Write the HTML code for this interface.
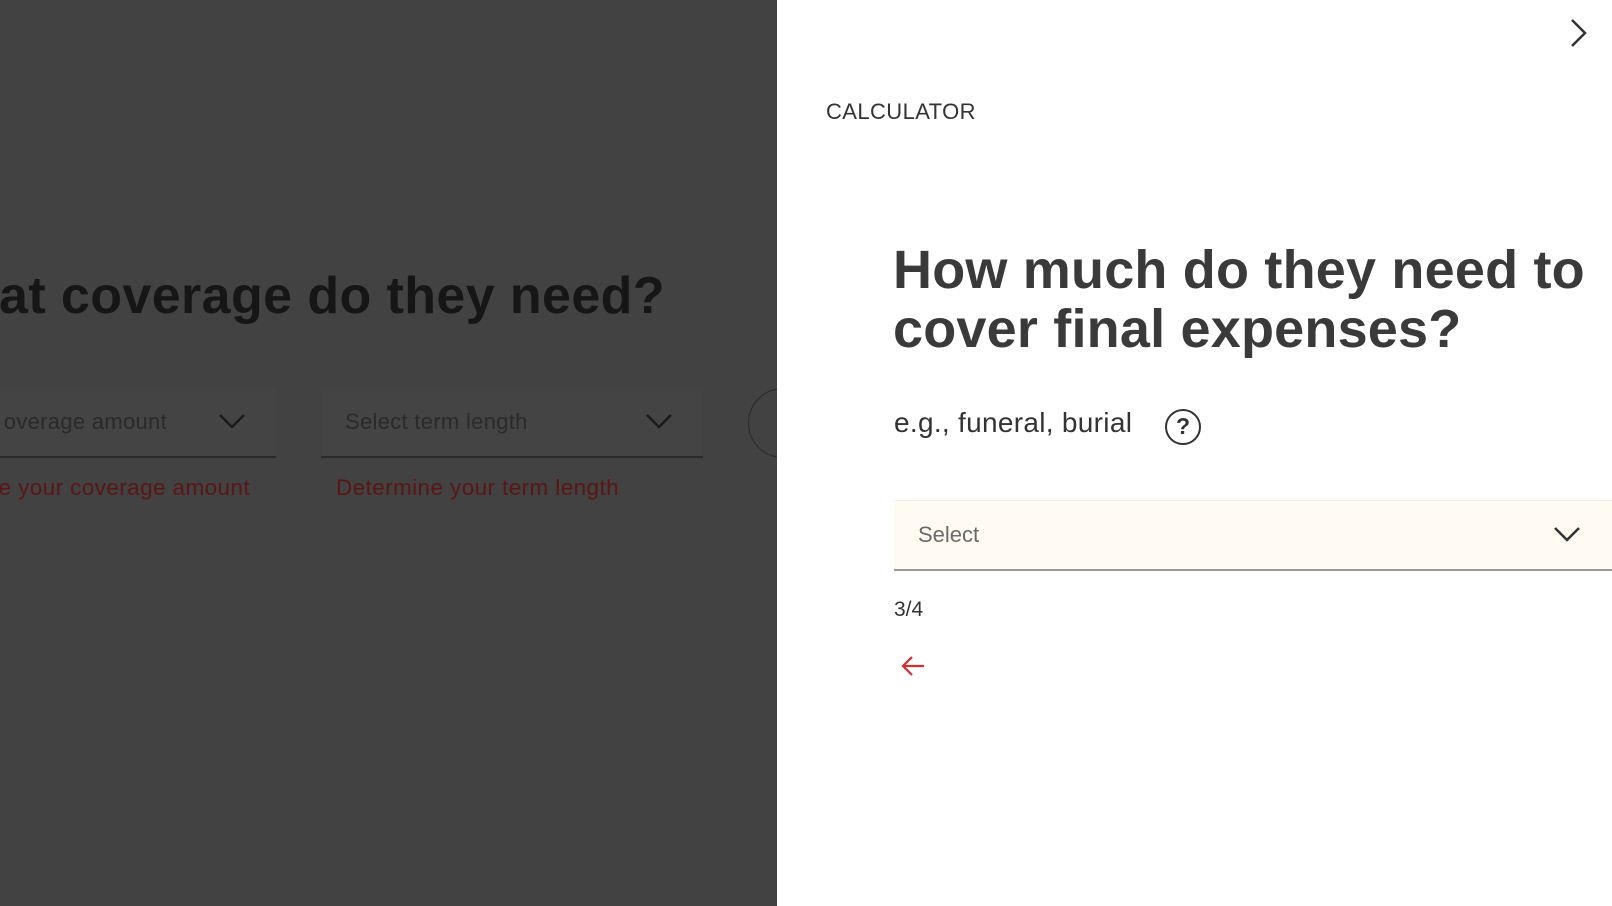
<!DOCTYPE html>
<html><head><meta charset="utf-8"><style>
*{margin:0;padding:0;box-sizing:border-box}
body{width:1612px;height:906px;overflow:hidden;position:relative;font-family:"Liberation Sans",sans-serif;background:#fff}
.left{position:absolute;left:0;top:0;width:777px;height:906px;background:#424242;overflow:hidden}
.abs{position:absolute;white-space:nowrap}
</style></head><body>
<div class="left">
  <div class="abs" style="right:112px;top:266px;font-size:52px;font-weight:bold;color:#161616;letter-spacing:0.4px">at coverage do they need?</div>
  <div class="abs" style="left:0;top:388px;width:276px;height:70px;border-bottom:2px solid #2a2a2a;background:#444"></div>
  <div class="abs" style="right:610px;top:409px;font-size:22px;color:#2a2a2a;letter-spacing:0.3px">overage amount</div>
  <svg class="abs" style="left:218px;top:412px" width="28" height="18" viewBox="0 0 28 18"><path d="M2 3 L14 15 L26 3" fill="none" stroke="#1a1a1a" stroke-width="2.5"/></svg>
  <div class="abs" style="left:321px;top:388px;width:382px;height:70px;border-bottom:2px solid #2a2a2a;background:#444"></div>
  <div class="abs" style="left:345px;top:409px;font-size:22px;color:#2a2a2a;letter-spacing:0.3px">Select term length</div>
  <svg class="abs" style="left:645px;top:412px" width="28" height="18" viewBox="0 0 28 18"><path d="M2 3 L14 15 L26 3" fill="none" stroke="#1a1a1a" stroke-width="2.5"/></svg>
  <div class="abs" style="left:748px;top:388px;width:70px;height:70px;border:1.5px solid #2a2a2a;border-radius:50%"></div>
  <div class="abs" style="right:527px;top:475px;font-size:22.5px;color:#5a1616;letter-spacing:0.4px">e your coverage amount</div>
  <div class="abs" style="left:336px;top:475px;font-size:22.5px;color:#5a1616;letter-spacing:0.4px">Determine your term length</div>
</div>
<svg class="abs" style="left:1568px;top:18px" width="22" height="30" viewBox="0 0 22 30"><path d="M4 2 L17 15 L4 28" fill="none" stroke="#333" stroke-width="2.5"/></svg>
<div class="abs" style="left:826px;top:99px;font-size:22px;color:#333;letter-spacing:0.4px">CALCULATOR</div>
<div class="abs" style="left:893px;top:241px;font-size:54px;font-weight:bold;color:#3a3a3a;line-height:59px;letter-spacing:0.2px">How much do they need to<br>cover final expenses?</div>
<div class="abs" style="left:894px;top:407px;font-size:28px;color:#333;letter-spacing:0.3px">e.g., funeral, burial</div>
<div class="abs" style="left:1165px;top:409px;width:36px;height:36px;border:2.5px solid #333;border-radius:50%;font-size:23px;font-weight:bold;color:#333;text-align:center;line-height:31px">?</div>
<div class="abs" style="left:894px;top:500px;width:718px;height:71px;background:#fffbf2;border-bottom:2px solid #9a9a9a;border-top:1px solid #f3efe6"></div>
<div class="abs" style="left:918px;top:522px;font-size:22px;color:#6a6a6a">Select</div>
<svg class="abs" style="left:1553px;top:525px" width="28" height="18" viewBox="0 0 28 18"><path d="M2 3 L14 15 L26 3" fill="none" stroke="#333" stroke-width="2.5"/></svg>
<div class="abs" style="left:894px;top:598px;font-size:21px;color:#333">3/4</div>
<svg class="abs" style="left:900px;top:655px" width="26" height="22" viewBox="0 0 26 22"><path d="M24 11 H3 M12 2 L3 11 L12 20" fill="none" stroke="#d32f2f" stroke-width="2.2"/></svg>
</body></html>
